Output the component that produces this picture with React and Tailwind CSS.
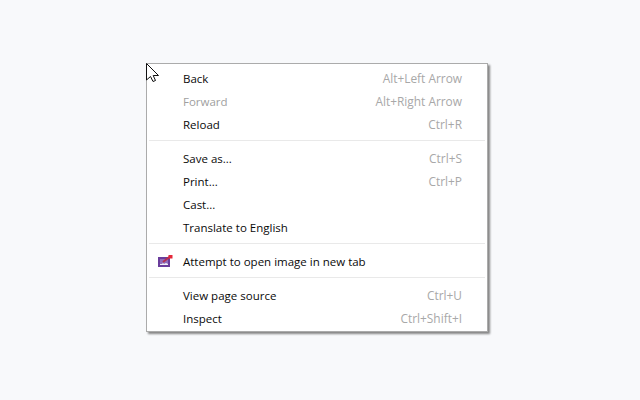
import React from 'react';

const groups = [
    [
        { label: 'Back', shortcut: 'Alt+Left Arrow' },
        { label: 'Forward', shortcut: 'Alt+Right Arrow', disabled: true },
        { label: 'Reload', shortcut: 'Ctrl+R' },
    ],
    [
        { label: 'Save as...', shortcut: 'Ctrl+S' },
        { label: 'Print...', shortcut: 'Ctrl+P' },
        { label: 'Cast...' },
        { label: 'Translate to English' },
    ],
    [{ label: 'Attempt to open image in new tab', icon: true }],
    [
        { label: 'View page source', shortcut: 'Ctrl+U' },
        { label: 'Inspect', shortcut: 'Ctrl+Shift+I' },
    ],
];

const ExtensionIcon = () => (
    <svg width="15" height="12" viewBox="0 0 15 12" className="absolute left-[11px] top-[5px]">
        <rect x="0" y="2" width="12" height="10" fill="#6a3d9c" />
        <rect x="2" y="4" width="8" height="6" fill="#8f6dbb" />
        <path d="M2 10 L2 9 L4 9 L5 8 L6 9 L8 8 L10 9 L10 10 Z" fill="#f2eef8" />
        <path d="M5 7 L12 1.5" stroke="#b5304f" strokeWidth="2" />
        <rect x="10.5" y="0" width="4" height="3.5" fill="#e5283a" />
    </svg>
);

const Cursor = () => (
    <svg width="14" height="20" viewBox="0 0 14 20" className="absolute left-[146px] top-[63px]">
        <path
            d="M0.5 0.5 L0.5 17 L4.5 13.5 L7 18.5 L9.5 17.5 L7.2 12.5 L12.5 12.5 Z"
            fill="#ffffff"
            stroke="#111111"
            strokeWidth="1"
        />
    </svg>
);

export default function App() {
    return (
        <div className="relative w-[640px] h-[400px] overflow-hidden bg-[#f8f9fb] pl-[146px] pt-[63px] font-['Open_Sans','Liberation_Sans',sans-serif]">
            <div className="w-[342px] h-[269px] bg-white border border-[#ababab] shadow-[2px_2px_2px_#858585] pt-[3px] text-[11.5px] text-[#0a0a0a]">
                {groups.map((group, i) => (
                    <div key={i}>
                        {i > 0 && <div className="mt-[4px] mb-[6px] mx-[2px] h-px bg-[#e9e9e9]" />}
                        {group.map((item) => (
                            <div key={item.label} className="relative h-[23px] pl-[36px] pr-[25px] flex items-center justify-between leading-none">
                                {item.icon && <ExtensionIcon />}
                                <span className={item.disabled ? 'text-[#a0a0a0]' : ''}>{item.label}</span>
                                {item.shortcut && <span className="text-[#a8a8a8] text-[11.9px]">{item.shortcut}</span>}
                            </div>
                        ))}
                    </div>
                ))}
            </div>
            <Cursor />
        </div>
    );
}
